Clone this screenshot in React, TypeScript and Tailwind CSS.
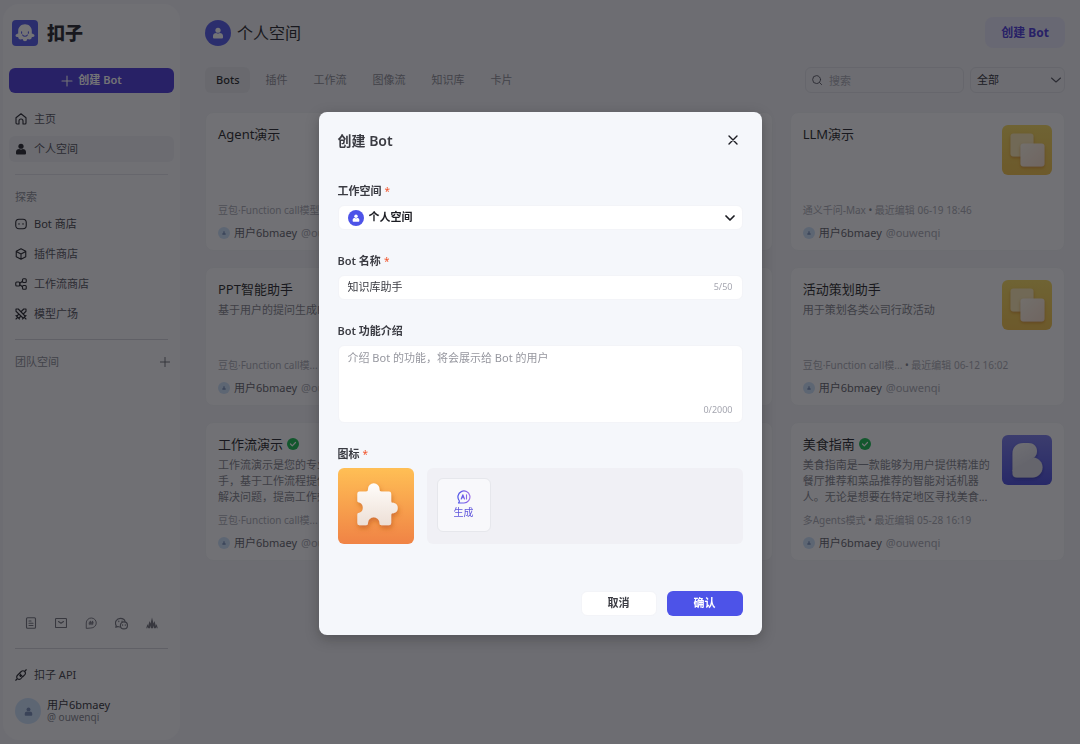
import { useState } from 'react'
import type { ReactNode } from 'react'

type Bot = {
  name: string
  desc?: string
  meta: string
  edited?: string
  verified?: boolean
  art: 'squares' | 'letter'
}

const bots: (Bot | null)[] = [
  { name: 'Agent演示', meta: '豆包·Function call模型', art: 'squares' },
  null,
  { name: 'LLM演示', meta: '通义千问-Max', edited: '06-19 18:46', art: 'squares' },
  { name: 'PPT智能助手', desc: '基于用户的提问生成PPT', meta: '豆包·Function call模...', art: 'squares' },
  null,
  {
    name: '活动策划助手',
    desc: '用于策划各类公司行政活动',
    meta: '豆包·Function call模...',
    edited: '06-12 16:02',
    art: 'squares',
  },
  {
    name: '工作流演示',
    desc: '工作流演示是您的专业工作流程演示助手，基于工作流程提供高效的方案并且解决问题，提高工作效率。',
    meta: '豆包·Function call模...',
    verified: true,
    art: 'letter',
  },
  null,
  {
    name: '美食指南',
    desc: '美食指南是一款能够为用户提供精准的餐厅推荐和菜品推荐的智能对话机器人。无论是想要在特定地区寻找美食...',
    meta: '多Agents模式',
    edited: '05-28 16:19',
    verified: true,
    art: 'letter',
  },
]

const tabs = ['Bots', '插件', '工作流', '图像流', '知识库', '卡片']

function Icon({ children, className = 'size-3' }: { children: ReactNode; className?: string }) {
  return (
    <svg
      className={`shrink-0 ${className}`}
      viewBox="0 0 24 24"
      fill="none"
      stroke="currentColor"
      strokeWidth={2.2}
      strokeLinecap="round"
      strokeLinejoin="round"
      aria-hidden="true"
    >
      {children}
    </svg>
  )
}

function PersonShape() {
  return (
    <g fill="currentColor" stroke="none">
      <circle cx="12" cy="6.5" r="5.2" />
      <path d="M2 18c0-4 3-6 6.500-6 1 .8 2.200 1.200 3.500 1.200s2.500-.4 3.500-1.200c3.500 0 6.500 2 6.500 6v3a2 2 0 0 1-2 2H4a2 2 0 0 1-2-2z" />
    </g>
  )
}

function Avatar({ className, iconClass }: { className: string; iconClass: string }) {
  return (
    <span className={`flex shrink-0 items-center justify-center rounded-full ${className}`}>
      <Icon className={iconClass}>
        <PersonShape />
      </Icon>
    </span>
  )
}

function Logo() {
  return (
    <svg className="size-[26px]" viewBox="0 0 26 26" aria-hidden="true">
      <rect width="26" height="26" rx="4" fill="#4d53e8" />
      <path
        d="M13 4.200c-4 0-6.800 2.900-6.800 6.600v2.600c-1.100.2-2.700.9-2.700 2.100 0 1 1.100 1.500 2.700 1.500 0 1.500.9 2.500 2.300 2.500.9 0 1.500-.2 2.100-.5.400 1.300 1.200 2.300 2.400 2.300s2-1 2.400-2.300c.6.300 1.200.5 2.100.5 1.400 0 2.300-1 2.300-2.500 1.600 0 2.700-.5 2.700-1.500 0-1.200-1.600-1.900-2.700-2.100v-2.600c0-3.700-2.800-6.600-6.800-6.600z"
        fill="#fff"
      />
      <path d="M9.600 11.800v1.400M16.400 11.800v1.400M10.600 15c.6.900 1.400 1.300 2.400 1.300s1.800-.4 2.400-1.300" fill="none" stroke="#4d53e8" strokeWidth="1.100" strokeLinecap="round" />
    </svg>
  )
}

function SquaresArt() {
  return (
    <svg className="size-[50px] shrink-0 rounded-md" viewBox="0 0 50 50" aria-hidden="true">
      <defs>
        <linearGradient id="sq-bg" x1="0" y1="0" x2="0" y2="1">
          <stop offset="0" stopColor="#f4d758" />
          <stop offset="1" stopColor="#f0bf44" />
        </linearGradient>
        <linearGradient id="sq-front" x1="0" y1="0" x2="1" y2="1">
          <stop offset="0" stopColor="#fdf6e6" />
          <stop offset="1" stopColor="#f6dcc8" />
        </linearGradient>
        <filter id="sq-shadow" x="-30%" y="-30%" width="160%" height="170%">
          <feDropShadow dx="0" dy="1.5" stdDeviation="1.5" floodColor="#c26a10" floodOpacity="0.55" />
        </filter>
      </defs>
      <rect width="50" height="50" fill="url(#sq-bg)" />
      <rect x="8.500" y="8.500" width="23" height="23" rx="3" fill="#f9e6ae" filter="url(#sq-shadow)" />
      <rect x="18.500" y="18.500" width="24" height="23" rx="3" fill="url(#sq-front)" filter="url(#sq-shadow)" />
    </svg>
  )
}

function LetterArt() {
  return (
    <svg className="size-[50px] shrink-0 rounded-md" viewBox="0 0 50 50" aria-hidden="true">
      <defs>
        <linearGradient id="lt-bg" x1="0" y1="0" x2="0" y2="1">
          <stop offset="0" stopColor="#7578ea" />
          <stop offset="1" stopColor="#4347dc" />
        </linearGradient>
        <linearGradient id="lt-top" x1="0.300" y1="0" x2="0.700" y2="1">
          <stop offset="0" stopColor="#f2f2f6" />
          <stop offset="0.600" stopColor="#dedee8" />
          <stop offset="1" stopColor="#a8a8c4" />
        </linearGradient>
        <filter id="lt-shadow" x="-30%" y="-30%" width="160%" height="170%">
          <feDropShadow dx="0" dy="1.5" stdDeviation="1.5" floodColor="#1b1e90" floodOpacity="0.6" />
        </filter>
      </defs>
      <rect width="50" height="50" fill="url(#lt-bg)" />
      <g filter="url(#lt-shadow)">
        <path d="M10.500 36V19c0-7 4-11 11-11h5c5 0 8.500 3.500 8.500 8 0 3-1 5-3 6.500L14 40z" fill="url(#lt-top)" />
        <path d="M10.500 35 32 22.500c5 .8 8.500 5 8.500 9.800 0 6-4.500 10.200-10 10.200H15c-3 0-4.500-1.500-4.500-4z" fill="#dcdce6" />
      </g>
    </svg>
  )
}

function PuzzleArt() {
  return (
    <svg className="size-[76px] shrink-0 rounded-md" viewBox="0 0 76 76" role="img" aria-label="Bot">
      <defs>
        <linearGradient id="pz-bg" x1="0" y1="0" x2="0" y2="1">
          <stop offset="0" stopColor="#ffbf55" />
          <stop offset="1" stopColor="#f08345" />
        </linearGradient>
        <linearGradient id="pz-fg" x1="0" y1="0" x2="0" y2="1">
          <stop offset="0" stopColor="#fffdfa" />
          <stop offset="1" stopColor="#eddfd6" />
        </linearGradient>
        <filter id="pz-shadow" x="-30%" y="-30%" width="170%" height="170%">
          <feDropShadow dx="1" dy="3" stdDeviation="2.5" floodColor="#b04a10" floodOpacity="0.5" />
        </filter>
      </defs>
      <rect width="76" height="76" fill="url(#pz-bg)" />
      <path
        d="M21.500 23.500H28c1.500 0 2-.8 2-2.500a5.500 5.500 0 0 1 11.500 0c0 1.700.6 2.500 2 2.500H51a2.200 2.200 0 0 1 2.200 2.200V33c0 1.500.8 2 2.300 1.800a5.300 5.300 0 0 1 0 10.400c-1.500-.1-2.300.3-2.300 1.800v8a2.200 2.200 0 0 1-2.200 2.200h-7.500c-1.500 0-2-.7-2-2.200a5.700 5.700 0 0 0-11.500 0c0 1.500-.5 2.200-2 2.200h-6.500a2.200 2.200 0 0 1-2.200-2.200v-8c0-1.500.5-2 2-2.200a5.500 5.500 0 0 0 0-10.300c-1.500-.2-2-.7-2-2v-6.800a2.200 2.200 0 0 1 2.200-2.200z"
        fill="url(#pz-fg)"
        filter="url(#pz-shadow)"
      />
    </svg>
  )
}

function VerifiedBadge() {
  return (
    <svg className="size-3 shrink-0" viewBox="0 0 12 12" aria-hidden="true">
      <circle cx="6" cy="6" r="6" fill="#10b84a" />
      <path d="m3.500 6 1.800 1.800 3.200-3.300" fill="none" stroke="#fff" strokeWidth="1.200" strokeLinecap="round" strokeLinejoin="round" />
    </svg>
  )
}

function NavItem({ icon, label, active, strong }: { icon: ReactNode; label: string; active?: boolean; strong?: boolean }) {
  return (
    <a
      href="#"
      className={`flex h-[26px] items-center gap-[7px] rounded-md px-[6px] text-[11px] ${
        active ? 'bg-[#edeef2] text-[#4b4c56]' : strong ? 'text-[#3a3b42]' : 'text-[#4b4c56]'
      }`}
    >
      <span className="text-[#1c1d23]">{icon}</span>
      {label}
    </a>
  )
}

function Sidebar() {
  return (
    <aside className="my-1 ml-[3px] flex w-[177px] shrink-0 flex-col rounded-2xl bg-[#f7f7fa] px-[6px] pt-4 pb-4">
      <div className="flex items-center gap-[9px] px-[3px]">
        <Logo />
        <span className="text-[18px] leading-[26px] font-black text-[#1c1d23]">扣子</span>
      </div>

      <button className="mt-[22px] flex h-[25px] items-center justify-center gap-[5px] rounded-md bg-[#4432d8] text-[11px] font-semibold text-white">
        <Icon>
          <path d="M12 2v20M2 12h20" />
        </Icon>
        创建 Bot
      </button>

      <nav className="mt-[13px] flex flex-col gap-1">
        <NavItem
          label="主页"
          icon={
            <Icon>
              <path d="M2 9.500 12 1.500l10 8V20a2 2 0 0 1-2 2h-4v-6a4 4 0 0 0-8 0v6H4a2 2 0 0 1-2-2z" />
            </Icon>
          }
        />
        <NavItem
          label="个人空间"
          active
          icon={
            <Icon>
              <PersonShape />
            </Icon>
          }
        />
      </nav>

      <hr className="mx-[6px] mt-3 border-[#dedfe6]" />
      <h2 className="mt-[14px] px-[6px] text-[11px] leading-4 text-[#868790]">探索</h2>
      <nav className="mt-[6px] flex flex-col gap-1">
        <NavItem
          label="Bot 商店"
          strong
          icon={
            <Icon>
              <rect x="1.500" y="2.500" width="21" height="19" rx="6.500" />
              <path d="M8 11v1.500M16 11v1.500" />
            </Icon>
          }
        />
        <NavItem
          label="插件商店"
          icon={
            <Icon>
              <path d="m12 1.500 9.500 5.200v10.600L12 22.500l-9.500-5.200V6.700zM2.500 7l9.500 5 9.500-5M12 12v10" />
            </Icon>
          }
        />
        <NavItem
          label="工作流商店"
          icon={
            <Icon>
              <rect x="1.500" y="8" width="8" height="8" rx="2" />
              <rect x="15" y="1.500" width="7.500" height="7.500" rx="2" />
              <rect x="15" y="15" width="7.500" height="7.500" rx="2" />
              <path d="M9.500 10.500 15 6.500M9.500 13.500l5.500 4" />
            </Icon>
          }
        />
        <NavItem
          label="模型广场"
          icon={
            <Icon>
              <path d="M2 2h4.500L20 16M2 2v4.500L16 20M22 2h-4.500L13 6.500M22 2v4.500L17.500 11M7 13l-3.500 3.500M11 17l-3.500 3.500M2 15l7 7M22 15l-7 7M4.500 19.500 2 22M19.500 19.500 22 22" />
            </Icon>
          }
        />
      </nav>

      <hr className="mx-[6px] mt-3 border-[#cfd0d8]" />
      <div className="mt-[14px] flex items-center justify-between pr-1 pl-[6px] text-[11px] leading-4 text-[#868790]">
        <h2>团队空间</h2>
        <button aria-label="新建团队" className="text-[#5b5c66]">
          <Icon className="size-[10px]">
            <path d="M12 1v22M1 12h22" />
          </Icon>
        </button>
      </div>

      <div className="mt-auto flex justify-between px-4 text-[#6b6c76]">
        <Icon>
          <rect x="3" y="1.500" width="18" height="21" rx="2" />
          <path d="M8 8h4M8 12.500h8M8 17h8" />
        </Icon>
        <Icon>
          <rect x="1" y="3" width="22" height="18" rx="1.500" />
          <path d="m7 9 5 3.500L17 9" />
        </Icon>
        <Icon>
          <path d="M2.500 22V12A10 10 0 1 1 12.500 22zM10.800 8.500l-1 7M15 8.500l-1 7M8.500 10.500h8M8 13.500h8" strokeWidth={1.9} />
        </Icon>
        <Icon className="size-[13px]">
          <path d="M9 18.500c-1.500 0-3-.3-4-.8L1.500 19l.7-3C-1.500 9.500 3 2.500 10 2.500c5 0 8 3 8.500 6M7 7.500v1M13 7.500v1" />
          <circle cx="16.500" cy="15.500" r="6.500" />
          <path d="M14 14.500v.5M19 14.500v.5" />
        </Icon>
        <Icon>
          <path
            d="M.5 22.500 2.800 14l1.500 4L7 8l2 5 3-12 3 12 2-5 2.700 10 1.500-4 2.300 8.500h-2l-1-3-1 3h-3.500L15 17l-1 5.500h-4L9 17l-1 5.500H4.500l-1-3-1 3z"
            fill="currentColor"
            stroke="none"
          />
        </Icon>
      </div>

      <hr className="mx-[6px] mt-[18px] border-[#cfd0d8]" />
      <div className="mt-[13px]">
        <NavItem
          label="扣子 API"
          strong
          icon={
            <Icon>
              <path d="M9 8.500 12.500 5a5 5 0 0 1 6.800 0 4.800 4.800 0 0 1 0 6.700L15.500 15.500zM8.500 9 5 12.500a4.800 4.800 0 0 0 0 6.700 4.800 4.800 0 0 0 6.700 0L15 15.500M19.500 4.500 22.500 1.500M4.500 19.500l-3 3M11.500 11.500l-2 2M13 13l-2 2" />
            </Icon>
          }
        />
      </div>
      <div className="mt-[10px] flex items-center gap-[6px] px-[6px]">
        <Avatar className="size-[26px] bg-[#c9def8] text-[#7088b4]" iconClass="size-[9px]" />
        <div className="text-[11px] leading-3 text-[#2b2c33]">
          用户6bmaey
          <p className="text-[10px] leading-3 text-[#7c7d87]">@ ouwenqi</p>
        </div>
      </div>
    </aside>
  )
}

function BotCard({ bot }: { bot: Bot | null }) {
  if (!bot) {
    return <li className="h-[139px] rounded-lg border border-[#eeeff3] bg-[#fafafc]" />
  }

  return (
    <li className="flex h-[139px] flex-col rounded-lg border border-[#eeeff3] bg-[#fafafc] px-3 pt-3 pb-[9px]">
      <div className="flex h-[77px] justify-between gap-[9px]">
        <div className="min-w-0 flex-1">
          <h3 className="flex items-center gap-1 text-[13px] leading-[18px] text-[#1c1d23]">
            {bot.name}
            {bot.verified && <VerifiedBadge />}
          </h3>
          {bot.desc && <p className="mt-1 text-[11px] leading-4 text-[#7c7d87]">{bot.desc}</p>}
        </div>
        {bot.art === 'squares' ? <SquaresArt /> : <LetterArt />}
      </div>
      <p className="text-[10px] leading-4 text-[#a5a6b0]">
        {bot.meta} <span className="text-[#7c7d87]">•</span> {bot.edited && `最近编辑 ${bot.edited}`}
      </p>
      <p className="mt-[7px] flex items-center gap-1 text-[11px] leading-4 text-[#5b5c66]">
        <Avatar className="size-3 bg-[#c9def8] text-[#7088b4]" iconClass="size-1" />
        用户6bmaey <span className="text-[#a5a6b0]">@ouwenqi</span>
      </p>
    </li>
  )
}

function Main() {
  const [tab, setTab] = useState('Bots')

  return (
    <main className="min-w-0 flex-1 pt-[17px] pr-[15px] pl-[25px]">
      <header className="flex h-[31px] items-center justify-between">
        <div className="flex items-center gap-[6px]">
          <Avatar className="size-[26px] bg-[#4d53e8] text-white" iconClass="size-3" />
          <h1 className="text-[16px] text-[#1c1d23]">个人空间</h1>
        </div>
        <button className="h-[31px] rounded-lg bg-[#e4e4f8] px-4 text-[12px] font-bold text-[#4432d8]">创建 Bot</button>
      </header>

      <div className="mt-[19px] flex h-[26px] items-center justify-between">
        <div className="flex gap-1">
          {tabs.map((t) => (
            <button
              key={t}
              onClick={() => setTab(t)}
              className={`h-[26px] rounded-md px-[11px] text-[11px] ${
                t === tab ? 'bg-[#e6e7ec] font-medium text-[#1c1d23]' : 'text-[#868790]'
              }`}
            >
              {t}
            </button>
          ))}
        </div>
        <div className="flex gap-[6px]">
          <div className="relative">
            <span className="absolute top-[8px] left-[7px] text-[#4b4c56]">
              <Icon className="size-[10px]">
                <circle cx="11" cy="11" r="9.500" />
                <path d="m18 18 5 5" />
              </Icon>
            </span>
            <input
              type="search"
              aria-label="搜索"
              placeholder="搜索"
              className="block h-[26px] w-[159px] rounded-md border border-[#dedfe6] pr-2 pl-[23px] text-[11px] placeholder:text-[#a5a6b0]"
            />
          </div>
          <div className="relative">
            <select
              aria-label="筛选"
              className="block h-[26px] w-[95px] appearance-none rounded-md border border-[#dedfe6] px-[6px] text-[11px] text-[#2b2c33]"
            >
              <option>全部</option>
            </select>
            <span className="pointer-events-none absolute top-[7px] right-[3px] text-[#4b4c56]">
              <Icon>
                <path d="m3 8 9 8 9-8" />
              </Icon>
            </span>
          </div>
        </div>
      </div>

      <ul className="mt-[19px] grid grid-cols-3 gap-x-[17px] gap-y-4">
        {bots.map((bot, i) => (
          <BotCard key={i} bot={bot} />
        ))}
      </ul>
    </main>
  )
}

function Label({ htmlFor, required, children }: { htmlFor: string; required?: boolean; children: ReactNode }) {
  return (
    <label htmlFor={htmlFor} className="mb-[5px] flex h-4 items-center gap-[3px] text-[11px] font-semibold text-[#3a3b42]">
      {children}
      {required && <span className="text-[10px] font-normal text-[#f2552c]">*</span>}
    </label>
  )
}

function CreateBotDialog() {
  const [name, setName] = useState('知识库助手')
  const [intro, setIntro] = useState('')

  return (
    <div className="fixed inset-0 flex items-center justify-center bg-[#16161a]/60 pt-[2px]">
      <div
        role="dialog"
        aria-modal="true"
        aria-labelledby="dialog-title"
        className="w-[443px] rounded-lg bg-[#f5f7fb] px-[19px] pt-[17px] pb-[19px] shadow-[0_4px_14px_rgba(0,0,0,0.25)]"
      >
        <header className="flex h-[23px] items-center justify-between">
          <h2 id="dialog-title" className="text-[14px] font-semibold text-[#3a3b42]">
            创建 Bot
          </h2>
          <button aria-label="关闭" className="flex size-5 items-center justify-center text-[#1c1d23]">
            <Icon>
              <path d="m4 4 16 16M20 4 4 20" strokeWidth={2.800} />
            </Icon>
          </button>
        </header>

        <form className="mt-8 flex flex-col gap-6" onSubmit={(e) => e.preventDefault()}>
          <div>
            <Label htmlFor="space" required>
              工作空间
            </Label>
            <div className="relative">
              <span className="pointer-events-none absolute top-[5px] left-[10px]">
                <Avatar className="size-4 bg-[#4d53e8] text-white" iconClass="size-2" />
              </span>
              <select
                id="space"
                className="block h-[25px] w-full appearance-none rounded-md border border-[#f3f4f8] bg-white pl-[30px] text-[11px] font-semibold text-[#1c1d23]"
              >
                <option>个人空间</option>
              </select>
              <span className="pointer-events-none absolute top-[7px] right-[7px] text-[#1c1d23]">
                <Icon>
                  <path d="m4 8 8 8 8-8" strokeWidth={3.500} />
                </Icon>
              </span>
            </div>
          </div>

          <div>
            <Label htmlFor="name" required>
              Bot 名称
            </Label>
            <div className="flex h-[25px] items-center rounded-md border border-[#f3f4f8] bg-white px-[9px]">
              <input
                id="name"
                value={name}
                maxLength={50}
                onChange={(e) => setName(e.target.value)}
                className="min-w-0 flex-1 text-[11px] text-[#3a3b42] outline-none"
              />
              <span className="text-[9px] text-[#a5a6b0]">{name.length}/50</span>
            </div>
          </div>

          <div>
            <Label htmlFor="intro">Bot 功能介绍</Label>
            <div className="flex h-[78px] flex-col rounded-md border border-[#f3f4f8] bg-white px-[9px] py-1">
              <textarea
                id="intro"
                value={intro}
                placeholder="介绍 Bot 的功能，将会展示给 Bot 的用户"
                onChange={(e) => setIntro(e.target.value)}
                className="min-h-0 flex-1 resize-none text-[11px] leading-4 outline-none placeholder:text-[#96979f]"
              />
              <span className="self-end text-[9px] leading-4 text-[#a5a6b0]">{intro.length}/2000</span>
            </div>
          </div>

          <div>
            <Label htmlFor="generate" required>
              图标
            </Label>
            <div className="flex gap-[13px]">
              <PuzzleArt />
              <div className="flex-1 rounded-md bg-[#f0f0f5] p-[10px]">
                <button
                  id="generate"
                  type="button"
                  className="flex size-[54px] flex-col items-center justify-center rounded-md border border-[#e6e7ec] bg-[#f8f8fb] text-[10px] leading-4 text-[#5f55dc]"
                >
                  <svg className="size-[14px]" viewBox="0 0 28 28" fill="none" aria-hidden="true">
                    <defs>
                      <linearGradient id="ai-line" gradientUnits="userSpaceOnUse" x1="2" y1="0" x2="26" y2="0">
                        <stop offset="0" stopColor="#4d53e8" />
                        <stop offset="1" stopColor="#a070e8" />
                      </linearGradient>
                    </defs>
                    <g stroke="url(#ai-line)" strokeLinecap="round" strokeLinejoin="round">
                      <path d="M4.500 21.500A12 12 0 1 1 14 26H3c1.500-1.500 2-3 1.500-4.500z" strokeWidth="2.400" />
                      <path d="m8.500 18 3.200-8.500L15 18M9.800 15.500h4M19 9.500V18" strokeWidth="2.200" />
                    </g>
                  </svg>
                  生成
                </button>
              </div>
            </div>
          </div>
        </form>

        <footer className="mt-[47px] flex justify-end gap-[10px]">
          <button className="h-[25px] w-[76px] rounded-md border border-[#f3f4f8] bg-white text-[11px] font-semibold text-[#3a3b42]">
            取消
          </button>
          <button className="h-[25px] w-[76px] rounded-md bg-[#4d53e8] text-[11px] font-semibold text-white">确认</button>
        </footer>
      </div>
    </div>
  )
}

export default function App() {
  return (
    <div className="flex min-h-screen bg-[#f0f0f5] font-['Noto_Sans','Noto_Sans_CJK_SC',sans-serif]">
      <Sidebar />
      <Main />
      <CreateBotDialog />
    </div>
  )
}
